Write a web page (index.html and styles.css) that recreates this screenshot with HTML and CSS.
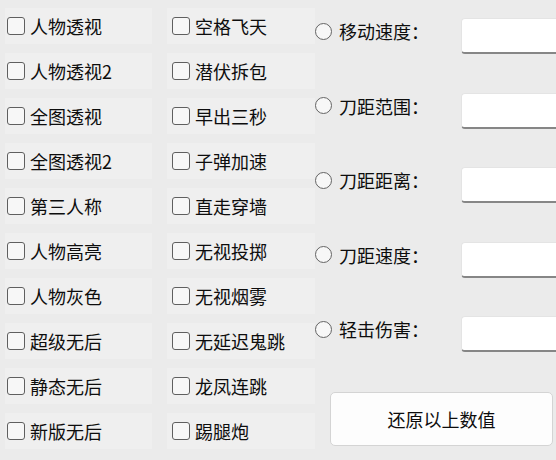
FILE: index.html
```html
<!DOCTYPE html>
<html lang="zh-CN">
  <head>
    <meta charset="UTF-8" />
    <meta name="viewport" content="width=device-width, initial-scale=1.0" />
    <title>功能设置</title>
    <link rel="stylesheet" href="styles.css">
  </head>
  <body>
    <div class="app">
      <div class="checks left">
        <label class="check"><span class="box"></span>人物透视</label>
        <label class="check"><span class="box"></span>人物透视2</label>
        <label class="check"><span class="box"></span>全图透视</label>
        <label class="check"><span class="box"></span>全图透视2</label>
        <label class="check"><span class="box"></span>第三人称</label>
        <label class="check"><span class="box"></span>人物高亮</label>
        <label class="check"><span class="box"></span>人物灰色</label>
        <label class="check"><span class="box"></span>超级无后</label>
        <label class="check"><span class="box"></span>静态无后</label>
        <label class="check"><span class="box"></span>新版无后</label>
      </div>

      <div class="checks mid">
        <label class="check"><span class="box"></span>空格飞天</label>
        <label class="check"><span class="box"></span>潜伏拆包</label>
        <label class="check"><span class="box"></span>早出三秒</label>
        <label class="check"><span class="box"></span>子弹加速</label>
        <label class="check"><span class="box"></span>直走穿墙</label>
        <label class="check"><span class="box"></span>无视投掷</label>
        <label class="check"><span class="box"></span>无视烟雾</label>
        <label class="check"><span class="box"></span>无延迟鬼跳</label>
        <label class="check"><span class="box"></span>龙凤连跳</label>
        <label class="check"><span class="box"></span>踢腿炮</label>
      </div>

      <div class="params">
        <div class="param">
          <label class="radio"><span class="dot"></span>移动速度：</label>
          <input class="field" type="text" />
        </div>
        <div class="param">
          <label class="radio"><span class="dot"></span>刀距范围：</label>
          <input class="field" type="text" />
        </div>
        <div class="param">
          <label class="radio"><span class="dot"></span>刀距距离：</label>
          <input class="field" type="text" />
        </div>
        <div class="param">
          <label class="radio"><span class="dot"></span>刀距速度：</label>
          <input class="field" type="text" />
        </div>
        <div class="param">
          <label class="radio"><span class="dot"></span>轻击伤害：</label>
          <input class="field" type="text" />
        </div>
        <button class="reset">还原以上数值</button>
      </div>
    </div>
  </body>
</html>
```

FILE: styles.css
```css
body {
  margin: 0;
  background-color: #ebebeb;
  font-family: "Noto Sans CJK SC", "Microsoft YaHei", sans-serif;
  font-size: 18px;
  color: #0d0d0d;
  overflow: hidden;
}
.app {
  display: grid;
  grid-template-columns: 165px 145px 1fr;
  height: 460px;
}
.checks {
  display: flex;
  flex-direction: column;
  padding-top: 3px;
}
.left {
  padding-left: 5px;
}
.check {
  display: flex;
  align-items: center;
  gap: 5px;
  height: 36px;
  margin: 4.5px 0;
  width: 147px;
  padding-left: 2px;
  box-sizing: border-box;
  background-color: #efefef;
  line-height: 26px;
}
.mid .check {
  margin-left: 2px;
  width: 148px;
  padding-left: 5px;
}
.box {
  width: 18px;
  height: 18px;
  box-sizing: border-box;
  border: 1.5px solid #5f5f5f;
  border-radius: 3px;
  background-color: #f7f7f7;
  flex-shrink: 0;
}
.params {
  display: flex;
  flex-direction: column;
  gap: 38.5px;
  padding-top: 18px;
}
.param {
  display: flex;
  align-items: flex-start;
  height: 36px;
}
.radio {
  display: flex;
  align-items: center;
  gap: 7px;
  width: 151px;
  flex-shrink: 0;
  padding-left: 5px;
  box-sizing: border-box;
  line-height: 26px;
}
.dot {
  width: 17px;
  height: 17px;
  box-sizing: border-box;
  border: 1.5px solid #646464;
  border-radius: 50%;
  background-color: #f7f7f7;
  flex-shrink: 0;
}
.field {
  width: 110px;
  height: 36px;
  flex-shrink: 0;
  box-sizing: border-box;
  border: 1px solid #e4e4e4;
  border-bottom: 2px solid #868686;
  border-radius: 4px 0 0 4px;
  background-color: #ffffff;
  outline: none;
}
.reset {
  margin: 1.5px 0 0 20px;
  width: 223px;
  height: 54px;
  background-color: #fdfdfd;
  border: 1px solid #d4d4d4;
  border-radius: 5px;
  font-family: inherit;
  font-size: 18px;
  color: #0d0d0d;
}
```
